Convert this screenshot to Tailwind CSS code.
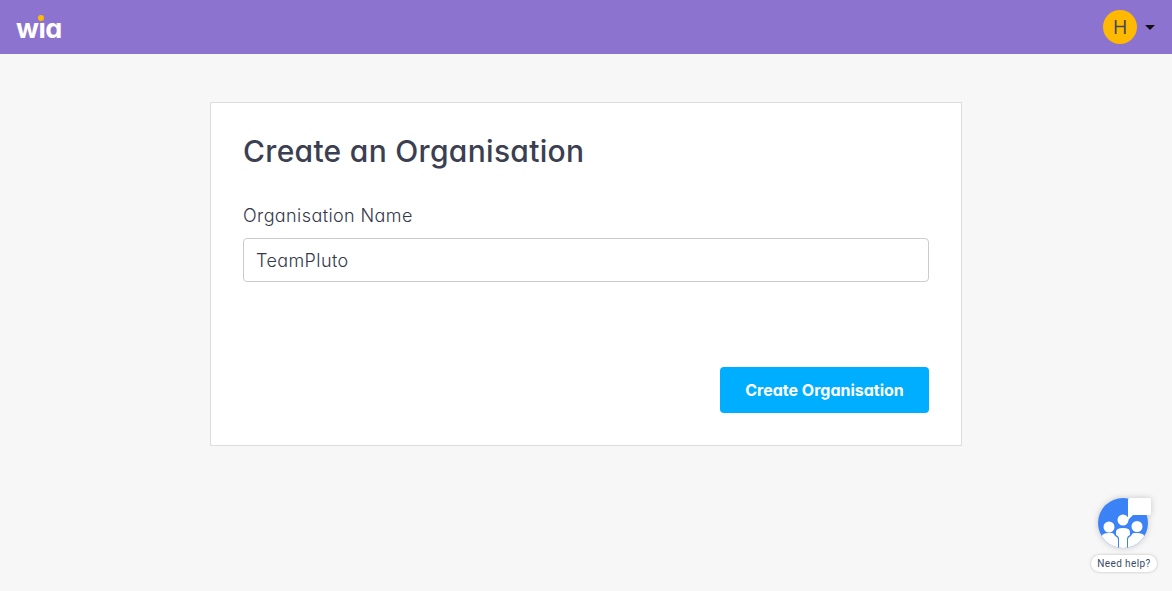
<!DOCTYPE html>
<html lang="en">
<head>
    <meta charset="UTF-8">
    <meta name="viewport" content="width=device-width, initial-scale=1.0">
    <title>Create an Organisation</title>
    <script src="https://cdn.jsdelivr.net/npm/@tailwindcss/browser@4"></script>
</head>
<body class="bg-[#f7f7f7] min-h-screen overflow-hidden relative font-['Inter',sans-serif] [font-feature-settings:'cv11'] text-[#3b3f51]">
    <header class="h-[54px] bg-[#8c73cf] flex items-center justify-between pl-[16px] pr-[17px]">
        <div class="relative w-[46px] h-[40px]">
            <span class="absolute left-0 top-[4px] text-[27px] leading-[36px] font-bold text-white tracking-[-0.5px]">wıa</span>
            <span class="absolute left-[22px] top-[8px] w-[6px] h-[6px] rounded-full bg-[#ffb900]"></span>
        </div>
        <div class="flex items-center gap-[8px]">
            <div class="w-[34px] h-[34px] rounded-full bg-[#ffb900] flex items-center justify-center text-[20px] text-[#44485a] font-['Open_Sans',sans-serif]">H</div>
            <span class="w-0 h-0 border-x-[5px] border-x-transparent border-t-[5px] border-t-[#111]"></span>
        </div>
    </header>

    <main class="w-[752px] h-[344px] ml-[210px] mt-[48px] bg-white border border-[#dddddd] pt-[28px] pl-[32px] pr-[32px]">
        <h1 class="text-[30px] leading-[40px] font-medium tracking-[0.3px]">Create an Organisation</h1>
        <label class="block mt-[33px] text-[18px] leading-[24px] font-[350] tracking-[0.4px] text-[#34384a]">Organisation Name</label>
        <div class="mt-[10px] h-[44px] border border-[#cccccc] rounded-[4px] flex items-center px-[12px] text-[18px] font-[350] tracking-[0.4px] text-[#34384a]">TeamPluto</div>
        <div class="flex justify-end mt-[85px]">
            <button class="w-[209px] h-[46px] bg-[#00aeff] rounded-[4px] text-white text-[16px] font-bold pb-[1px]">Create Organisation</button>
        </div>
    </main>

    <div class="absolute left-[1091px] top-[497px] w-[66px] h-[76px]">
        <svg class="absolute left-[6px] top-0 drop-shadow-[0_0_3px_rgba(0,0,0,0.2)]" width="56" height="54" viewBox="0 0 56 54">
            <defs><clipPath id="c"><circle cx="26" cy="26" r="25"/></clipPath></defs>
            <circle cx="26" cy="26" r="25" fill="#3b82f6"/>
            <g clip-path="url(#c)" fill="#fff">
                <circle cx="12" cy="30" r="5.5"/>
                <circle cx="26" cy="23" r="5.5"/>
                <circle cx="40" cy="29.5" r="5.5"/>
                <path d="M4 52 V42 q0-6 7-6 h4 q2 0 3 3 q3 1 3 4 V52z"/>
                <path d="M19 35 q0-4 7-4 q7 0 7 4 v3 q-3 1-3 4 V52 h-8 V42 q0-3-3-4z"/>
                <path d="M48 52 V42 q0-6-7-6 h-4 q-2 0-3 3 q-3 1-3 4 V52z"/>
            </g>
            <path d="M31 3 a2 2 0 0 1 2-2 h19 a2 2 0 0 1 2 2 v13 a2 2 0 0 1-2 2 h-16 l-5 5z" fill="#fff"/>
        </svg>
        <div class="absolute left-0 top-[58px] w-[66px] h-[17px] bg-white rounded-full shadow-[0_0_3px_rgba(0,0,0,0.25)] flex items-center justify-center text-[10px] tracking-[0.4px] text-[#3b4a66] font-['Roboto',sans-serif]">Need help?</div>
    </div>
</body>
</html>
